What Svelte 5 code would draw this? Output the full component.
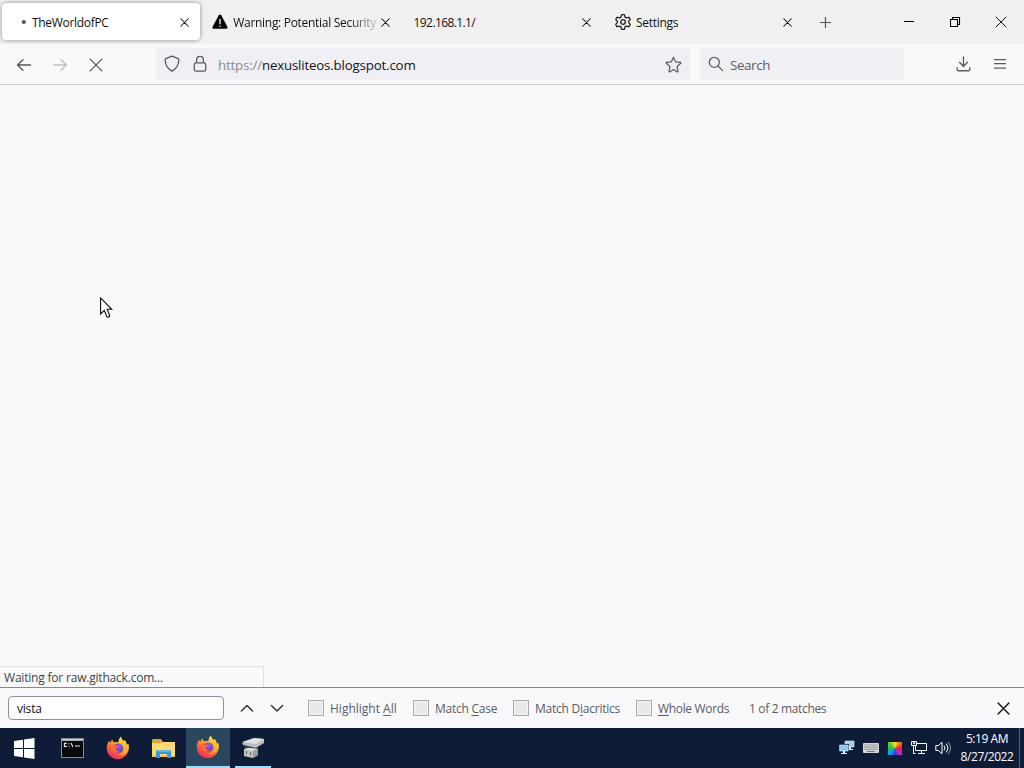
<script>
  const tabs = [
    { title: 'TheWorldofPC', icon: 'dot', active: true, spacing: -0.31 },
    { title: 'Warning: Potential Security', icon: 'warning', spacing: -0.3 },
    { title: '192.168.1.1/', icon: '', spacing: -0.6 },
    { title: 'Settings', icon: 'gear', spacing: -0.26 }
  ];
  const options = [
    { before: 'Highlight ', key: 'A', after: 'll', width: 105, spacing: 0 },
    { before: 'Match ', key: 'C', after: 'ase', width: 100, spacing: -0.25 },
    { before: 'Match D', key: 'i', after: 'acritics', width: 123, spacing: -0.24 },
    { before: '', key: 'W', after: 'hole Words', width: 105, spacing: -0.34 }
  ];
</script>

{#snippet cross(size, stroke)}
  <svg width={size} height={size} viewBox="0 0 12 12" fill="none" stroke="currentColor" stroke-width={stroke} stroke-linecap="round"><path d="M1 1 11 11M11 1 1 11" /></svg>
{/snippet}

{#snippet firefox(id)}
  <svg width="24" height="24" viewBox="0 0 24 24">
    <defs>
      <linearGradient id={'flame' + id} x1=".8" y1="0" x2=".25" y2="1">
        <stop offset="0" stop-color="#fff04a" /><stop offset=".35" stop-color="#ffb52b" /><stop offset=".65" stop-color="#ff6138" /><stop offset="1" stop-color="#ed2464" />
      </linearGradient>
      <radialGradient id={'globe' + id} cx=".55" cy=".3"><stop offset="0" stop-color="#a05bf2" /><stop offset="1" stop-color="#6547bd" /></radialGradient>
    </defs>
    <path fill={`url(#flame${id})`} d="M2.6 5 4.4 6.6 6 3.6l2 2.8c1.5-.5 3-.5 4.4-.2C12.4 3.8 13.4 1.8 15 .4c.3 2.2 1.7 3.4 3.1 4.7l.6-1c1.2 1.4 1.9 3 2.2 4.5l1.6-.7c1.5 6.3-1.2 12-6.5 14.3-5.5 2.2-11.8 0-14.2-5.2C.2 13.2.6 10 1.5 8z" />
    <path fill={`url(#globe${id})`} d="M8.3 9.3c2.1-2.9 7.4-2.3 8.6 1.3 1 3.4-1.3 6.2-4.5 6.2-3.1 0-5.5-2.6-5-5.6z" />
    <path fill="#ff6a34" d="M3.7 10.2C5.6 8.2 8 8.4 9.3 9.8c1.2.1 2.5 0 2.8.5.2.8-1.8 1.5-2.3 2.1-.3 2.2 1.9 3 4.1 2.2-1.4 3.1-7.2 2.4-8.7-1.2z" />
    <path fill="#ffb134" d="M14.6 6.8c2.9.9 4.4 3.3 4.1 6.3-.4 3.3-3 5.3-6.2 5.4 4.9 1.3 8.4-1.6 8.7-5.7-.4-3.5-2.5-6-6.6-6z" />
  </svg>
{/snippet}

<main class="screen">
  <header class="tabbar">
    {#each tabs as tab}
      <div class="tab" class:active={tab.active}>
        {#if tab.icon}
          <span class="tab-icon">
            {#if tab.icon === 'dot'}
              <svg width="16" height="16" viewBox="0 0 16 16"><circle cx="7.8" cy="8" r="2.1" fill="#555" /></svg>
            {:else if tab.icon === 'warning'}
              <svg width="16" height="16" viewBox="0 0 16 16"><path d="M6.8 1.3q1.2-1.4 2.4 0l6.2 11.5q.5 2-1.3 2H1.9q-1.8 0-1.3-2z" fill="#050505" /><path d="M8 5.4v4.3" stroke="#eee" stroke-width="1.4" stroke-linecap="round" /><circle cx="8" cy="12.2" r=".8" fill="#eee" /></svg>
            {:else}
              <svg width="16" height="16" viewBox="0 0 16 16" fill="none" stroke="#222" stroke-width="1.3" stroke-linejoin="round"><path d="m6.5 1 .4-.4h2.2l.4.4.5 2.1 1.4.8 2.1-.6.6.1 1.1 1.9-.1.6L13.6 7.4v1.2l1.5 1.5.1.6-1.1 1.9-.6.1-2.1-.6-1.4.8-.5 2.1-.4.4H6.9l-.4-.4-.5-2.1-1.4-.8-2.1.6-.6-.1-1.1-1.9.1-.6 1.5-1.5V7.4L.9 5.9l-.1-.6 1.1-1.9.6-.1 2.1.6L6 3.1z" /><circle cx="8" cy="8" r="2.3" /></svg>
            {/if}
          </span>
        {/if}
        <span class="tab-title" class:fade={tab.icon === 'warning'} style="letter-spacing:{tab.spacing}px">{tab.title}</span>
        <span class="tab-close">{@render cross(9, 1.4)}</span>
      </div>
    {/each}
    <div class="new-tab"><svg width="13" height="13" viewBox="0 0 13 13" stroke="#555" stroke-width="1.2"><path d="M6.5 1v11M1 6.5h11" /></svg></div>
    <div class="window-controls">
      <span><svg width="11" height="11" viewBox="0 0 11 11" stroke="#000"><path d="M0 4.5h10" /></svg></span>
      <span><svg width="11" height="11" viewBox="0 0 11 11" fill="none" stroke="#000" stroke-width="1.1"><path d="M.5 2.5h7v7h-7zM2.5 2.5v-2h7v7h-2" /></svg></span>
      <span>{@render cross(12, 1)}</span>
    </div>
  </header>

  <nav class="toolbar">
    <div class="nav-buttons">
      <span><svg width="16" height="16" viewBox="0 0 16 16" fill="none" stroke="#555" stroke-width="1.3" stroke-linecap="round" stroke-linejoin="round"><path d="M14.5 8H1.5M7 2.8 1.5 8 7 13.2" /></svg></span>
      <span class="disabled"><svg width="16" height="16" viewBox="0 0 16 16" fill="none" stroke="#bbb" stroke-width="1.3" stroke-linecap="round" stroke-linejoin="round"><path d="M1.5 8h13M9 2.8 14.5 8 9 13.2" /></svg></span>
      <span>{@render cross(14, 1.1)}</span>
    </div>
    <div class="urlbar">
      <svg width="16" height="18" viewBox="0 0 16 18" fill="none" stroke="#5b5b66" stroke-width="1.3" stroke-linejoin="round"><path d="M8 1.2 14.2 3.6q.7.3.7 1C14.8 10.2 12.2 14 8 16.2 3.8 14 1.2 10.2 1.1 4.6q0-.7.7-1z" /></svg>
      <svg class="lock" width="14" height="18" viewBox="0 0 14 18" fill="none" stroke="#5b5b66" stroke-width="1.3"><rect x="1.3" y="7.8" width="11.4" height="8.3" rx="1.6" /><path d="M3.6 7.5V4.8a3.4 3.4 0 0 1 6.8 0v2.8" /></svg>
      <span class="address"><i>https://</i>nexusliteos.blogspot.com</span>
      <svg class="star" width="17" height="17" viewBox="0 0 17 17" fill="none" stroke="#5b5b66" stroke-width="1.25" stroke-linejoin="round"><path d="m8.5 1.2 2.1 4.6 5 .6q.6.3.1.9L12 10.7l1 4.8q-.1.7-.8.4l-3.7-2.4-3.7 2.4q-.7.3-.8-.4l1-4.8-3.7-3.4q-.5-.6.1-.9l5-.6z" /></svg>
    </div>
    <div class="searchbar">
      <svg width="16" height="16" viewBox="0 0 16 16" fill="none" stroke="#5b5b66" stroke-width="1.3" stroke-linecap="round"><circle cx="6.3" cy="6.3" r="5" /><path d="m10 10 4.6 4.6" /></svg>
      <span>Search</span>
    </div>
    <div class="tools">
      <svg width="16" height="16" viewBox="0 0 16 16" fill="none" stroke="#5b5b66" stroke-width="1.35" stroke-linecap="round" stroke-linejoin="round"><path d="M7.5 1v9M3.5 6.3l4 4.2 4-4.2M1.2 11.7v1.5q0 1.5 1.5 1.5h9.6q1.5 0 1.5-1.5v-1.5" /></svg>
      <svg width="14" height="14" viewBox="0 0 14 14" stroke="#5b5b66" stroke-width="1.25"><path d="M1 2.5h12M1 6.5h12M1 11h12" /></svg>
    </div>
  </nav>

  <section class="page">
    <svg class="pointer" width="13" height="22" viewBox="0 0 13 22"><path d="M.6 1v16l3.7-3.6 2.6 6.4 1.2.4 1.5-.8v-1.1L7.2 12.3h4.6z" fill="#fff" stroke="#000" stroke-width="1.05" /></svg>
    <div class="status">Waiting for raw.githack.com...</div>
  </section>

  <section class="findbar">
    <div class="find-input">vista</div>
    <div class="arrows">
      <svg width="14" height="9" viewBox="0 0 14 9" fill="none" stroke="#333" stroke-width="1.5" stroke-linecap="round" stroke-linejoin="round"><path d="m1.4 7 5.6-5.5L12.6 7" /></svg>
      <svg width="14" height="9" viewBox="0 0 14 9" fill="none" stroke="#333" stroke-width="1.5" stroke-linecap="round" stroke-linejoin="round"><path d="M1.4 1.5 7 7l5.6-5.5" /></svg>
    </div>
    {#each options as option}
      <div class="option" style="width:{option.width}px;letter-spacing:{option.spacing}px"><span class="check"></span><span class="label">{option.before}<u>{option.key}</u>{option.after}</span></div>
    {/each}
    <span class="matches">1 of 2 matches</span>
    <span class="find-close">{@render cross(13, 1.25)}</span>
  </section>

  <footer class="taskbar">
    <div class="launchers">
      <span class="start"><svg width="21" height="21" viewBox="0 0 21 21" fill="#fff"><path d="M0 3 9 1.8V10H0zM10 1.6 20.5 0v10H10zM0 11h9v8.2L0 18zM10 11h10.5v10L10 19.4z" /></svg></span>
      <span><svg width="23" height="20" viewBox="0 0 23 20"><path fill="#85898d" d="M0 0h23v20H0z" /><path fill="#08090a" d="M1 3h21v16H1z" /><path fill="#ced1d4" d="M1 1h21v1.5H1z" /><path d="M5.8 5.4H3.4v3h2.4M8 5.2v1m0 1.6v1M10 5l2 4m2-1h5" fill="none" stroke="#e8e8e8" stroke-width="1.1" /></svg></span>
      <span>{@render firefox('a')}</span>
      <span><svg width="23" height="21" viewBox="0 0 23 21"><path fill="#dea437" d="M1 1h8l2 3h11v5H0V2z" /><path fill="#ffda73" d="M0 5h9l2-1h12v15H0z" /><path fill="#f7c84e" d="M0 17h23v2H0z" /><path fill="#3997dc" d="M4 20v-7q0-1 1-1h13q1 0 1 1v7h-4v-4H8v4z" /><path fill="#62b6e9" d="M5 12h13v2H5z" /></svg></span>
      <span class="current">{@render firefox('b')}</span>
      <span class="opened"><svg width="24" height="24" viewBox="0 0 24 24"><path fill="#b9bfbf" d="m1 8 12-5 10 1v4l-8 5L2 10z" /><path fill="#dfe1df" d="m1 7 12-4 10 1-8 5z" /><path fill="#45494b" d="m3 11 12 2 2-1v2l-8 1-5-2z" /><path fill="#c0c4c1" d="m3 14 5-1 9 1v6l-5 3-9-2z" /><path fill="#e0e1dd" d="m3 14 5-1 9 1-5 2z" /><path fill="#979b99" d="m12 16 5-2v6l-5 3z" /><path fill="#666" d="M5 16h1v3H5zm4 1h1v3H9z" /></svg></span>
    </div>
    <div class="tray">
      <svg width="16" height="16" viewBox="0 0 16 16"><path fill="#9fd0eb" stroke="#d4effb" stroke-width=".6" d="M6 1h9v6H6z" /><path fill="#e3eff6" d="M10 7h2v2h2v1H9V9h1z" /><path fill="#0f1c38" d="M0 4h10v8H0z" /><path fill="#8ac7ec" stroke="#dceffa" stroke-width=".6" d="M.6 5h8.6v6H.6z" /><path fill="#f3f8fb" d="M4 11h2v2h2v1H2v-1h2z" /></svg>
      <svg width="16" height="16" viewBox="0 0 16 16"><rect y="3" width="16" height="10" rx="1" fill="#d6d7d7" /><path d="M1.5 5h13M1.5 7.2h13M1.5 9.3h13" stroke="#65696c" stroke-width="1.2" stroke-dasharray="1 1" /><path d="M4 11.5h8" stroke="#777" /></svg>
      <span class="color-wheel"></span>
      <svg width="16" height="16" viewBox="0 0 16 16" fill="none" stroke="#fff" stroke-width="1"><path d="M5.5 3.5h10v7h-11V6M10.5 10.5v3M7 13.5h7M.5 1.5h5v4h-5zM2.5 5.5v8h2" /><path d="M2.4 2.6h1.4v1.2H2.4z" /></svg>
      <svg width="16" height="16" viewBox="0 0 16 16" fill="none" stroke="#fff" stroke-width="1"><path d="M.8 5.6h2.5L7 2.2v11.6l-3.7-3.4H.8zM9 5.5q2 2.5 0 5M11 3.6q3.7 4.4 0 8.8" /><path d="M13 1.8q5 6.2 0 12.4" stroke="#8a94a7" /></svg>
    </div>
    <div class="clock"><span>5:19 AM</span><span>8/27/2022</span></div>
    <div class="show-desktop"></div>
  </footer>
</main>

<style>
  :global(body) { margin: 0; overflow: hidden; }
  .screen { width: 1024px; height: 768px; display: flex; flex-direction: column; background: #f9f9fb; font: 12px/16px "Open Sans", "Noto Sans", sans-serif; color: #111; letter-spacing: -.2px; white-space: nowrap; overflow: hidden; }
  .screen * { box-sizing: border-box; }
  svg { display: block; flex: none; }
  .tabbar { height: 44px; flex: none; display: flex; align-items: flex-start; background: #f0f0f0; padding: 3px 0 0 2px; }
  .tab { width: 198px; height: 37px; margin-right: 3.3px; padding: 1px 11.5px 0 9px; display: flex; align-items: center; border-radius: 4px; flex: none; }
  .active { background: #fff; box-shadow: 0 0 4px #888; padding-left: 14px; }
  .tab-icon { width: 16px; margin-right: 5px; flex: none; }
  .active .tab-icon { margin-right: 0; }
  .tab-title { flex: 1; min-width: 0; padding-top: 1px; }
  .fade { mask-image: linear-gradient(to right, #000 115px, transparent 150px); }
  .tab-close { width: 9px; flex: none; margin-left: 3px; }
  .new-tab { width: 42px; height: 39px; display: grid; place-items: center; margin-left: -2.5px; }
  .window-controls { margin-left: auto; display: flex; height: 38px; }
  .window-controls span { width: 46px; display: grid; place-items: center; }
  .toolbar { height: 41px; flex: none; display: flex; align-items: center; border-bottom: 1px solid #ccccd0; }
  .nav-buttons { display: flex; width: 156px; padding: 1px 0 0 6px; color: #555; }
  .nav-buttons span { width: 36px; display: grid; place-items: center; height: 32px; }
  .nav-buttons .disabled { opacity: .9; }
  .urlbar { width: 534px; height: 32px; padding: 0 8.5px 0 8px; display: flex; align-items: center; background: #f0f0f4; border-radius: 2px; font-size: 13.3px; letter-spacing: -.18px; }
  .lock { margin-left: 13px; }
  .address { margin-left: 11px; padding-top: 2px; flex: 1; color: #15141a; }
  .address i { font-style: normal; color: #8b8b93; }
  .searchbar { width: 204px; height: 32px; margin-left: 10px; padding-left: 8px; display: flex; align-items: center; gap: 6px; background: #f0f0f4; color: #5b5b66; font-size: 13.3px; letter-spacing: -.35px; }
  .searchbar span { padding-top: 2px; }
  .tools { display: flex; align-items: center; gap: 21px; margin-left: 52px; height: 38px; }
  .page { flex: 1; position: relative; display: flex; align-items: flex-end; }
  .pointer { position: absolute; left: 100px; top: 212px; }
  .status { width: 264px; height: 21px; padding: 3px 4px 0; border: 1px solid #dedee0; border-width: 1px 1px 0 0; color: #444; letter-spacing: -.2px; }
  .findbar { height: 41px; flex: none; display: flex; align-items: center; border-top: 1px solid #88888b; color: #5b5b66; padding-left: 8px; }
  .find-input { width: 216px; height: 24px; border: 1px solid #8f8f9d; border-radius: 4px; background: #fff; color: #111; padding: 4px 8px; }
  .arrows { display: flex; width: 84px; padding-left: 16px; gap: 16px; }
  .option { display: flex; align-items: center; gap: 6px; flex: none; }
  .label, .matches { padding-top: 2px; }
  .check { width: 16px; height: 16px; flex: none; border: 1px solid #aaa; background: #e9e9ea; box-shadow: inset 0 0 0 1px #f4f4f4; }
  u { text-underline-offset: 2px; text-decoration-thickness: 1px; }
  .matches { margin-left: 8px; letter-spacing: -.34px; }
  .find-close { margin-left: auto; margin-right: 14px; color: #111; }
  .taskbar { height: 40px; flex: none; display: flex; background: #0f1c38; color: #fff; }
  .launchers { display: flex; }
  .launchers span { width: 45.5px; height: 40px; display: grid; place-items: center; }
  .launchers .start { width: 49.5px; padding-right: 1px; }
  .launchers .current { width: 44px; background: #2b465f; border-bottom: 2px solid #9be0fa; }
  .launchers .opened { width: 36px; border-bottom: 2px solid #9be0fa; margin-left: 5px; }
  .tray { display: flex; align-items: center; gap: 8px; margin-left: auto; margin-right: 10px; }
  .color-wheel { width: 14px; height: 13px; margin: 0 1px; background: conic-gradient(#f0ea24, #ff6c18, #e91745, #c52cc4, #273ce5, #129fee, #1dbd61, #69cb26, #f0ea24); }
  .clock { width: 52px; display: flex; flex-direction: column; align-items: center; padding-top: 2px; line-height: 18px; letter-spacing: -.45px; }
  .show-desktop { width: 5px; border-left: 1px solid #56617a; margin-left: 6px; }
</style>
